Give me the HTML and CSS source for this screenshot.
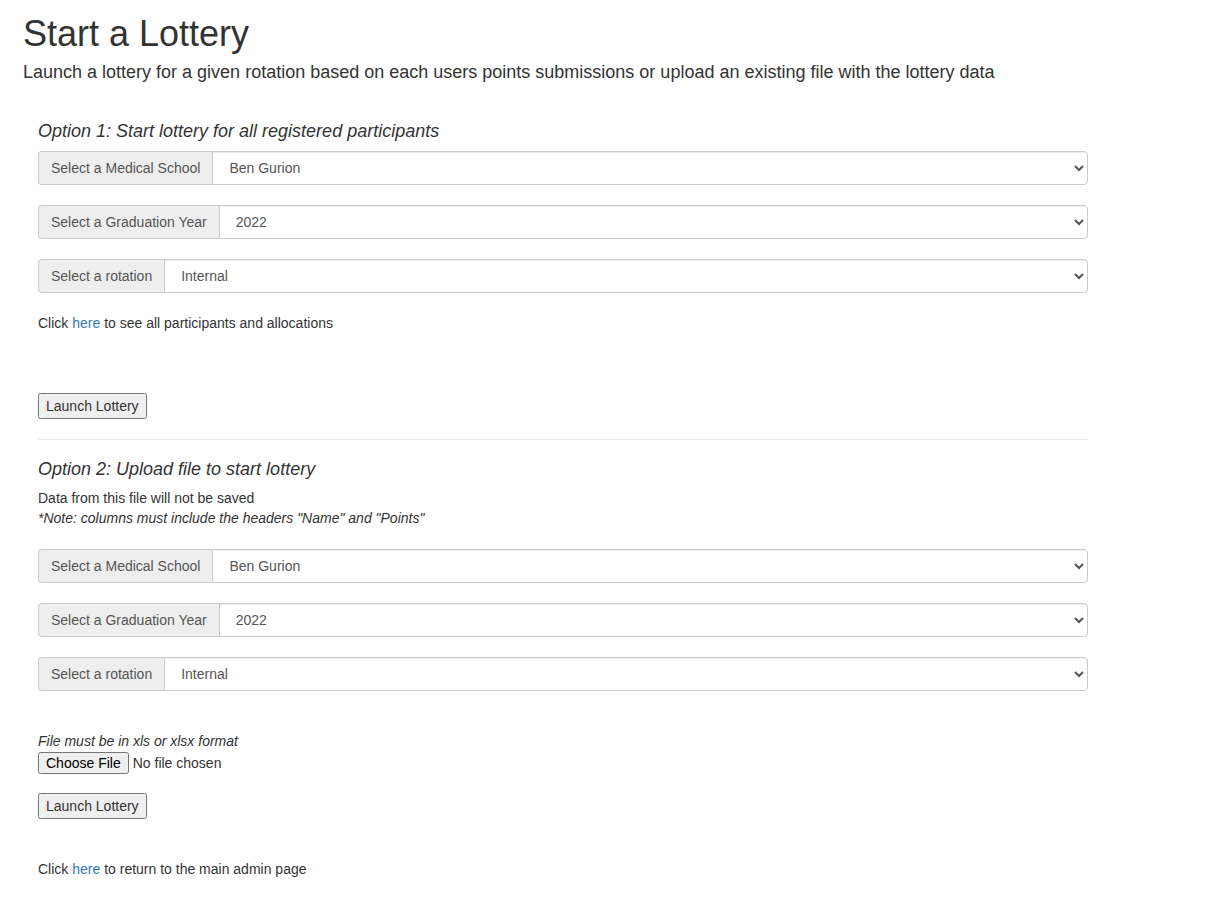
FILE: index.html
```html
<!DOCTYPE html>
<html>
<head>
<meta charset="utf-8">
<title>Start a Lottery</title>
<link rel="stylesheet" href="styles.css">
</head>
<body>
<div class="page">
  <h1 class="title">Start a Lottery</h1>
  <p class="lead">Launch a lottery for a given rotation based on each users points submissions or upload an existing file with the lottery data</p>

  <div class="section">
    <h4 class="option-title">Option 1: Start lottery for all registered participants</h4>
    <div class="input-group">
      <span class="addon">Select a Medical School</span>
      <select class="form-control"><option>Ben Gurion</option></select>
    </div>
    <div class="input-group">
      <span class="addon">Select a Graduation Year</span>
      <select class="form-control"><option>2022</option></select>
    </div>
    <div class="input-group">
      <span class="addon">Select a rotation</span>
      <select class="form-control"><option>Internal</option></select>
    </div>
    <p class="text see-all">Click <a href="#">here</a> to see all participants and allocations</p>
    <div class="launch launch-1"><button class="btn" type="button">Launch Lottery</button></div>
    <hr class="divider">
    <h4 class="option-title">Option 2: Upload file to start lottery</h4>
    <p class="text info">Data from this file will not be saved<br><em>*Note: columns must include the headers "Name" and "Points"</em></p>
    <div class="input-group">
      <span class="addon">Select a Medical School</span>
      <select class="form-control"><option>Ben Gurion</option></select>
    </div>
    <div class="input-group">
      <span class="addon">Select a Graduation Year</span>
      <select class="form-control"><option>2022</option></select>
    </div>
    <div class="input-group">
      <span class="addon">Select a rotation</span>
      <select class="form-control"><option>Internal</option></select>
    </div>
    <div class="file-block">
      <p class="text"><em>File must be in xls or xlsx format</em></p>
      <input class="file" type="file">
    </div>
    <div class="launch launch-2"><button class="btn" type="button">Launch Lottery</button></div>
    <p class="text back">Click <a href="#">here</a> to return to the main admin page</p>
  </div>
</div>
</body>
</html>
```

FILE: styles.css
```css
html, body {
  margin: 0;
  padding: 0;
  background: #fff;
}
body {
  font-family: "Liberation Sans", Arial, Helvetica, sans-serif;
  font-size: 14px;
  line-height: 1.42857;
  color: #333;
}
.page {
  padding: 0 23px;
}
.title {
  font-size: 36px;
  font-weight: 500;
  line-height: 1.1;
  margin: 14px 0 0;
  color: #333;
}
.lead {
  font-size: 18px;
  line-height: 1.1;
  margin: 9px 0 0;
}
.section {
  width: 1050px;
  margin: 40px 0 0 15px;
}
.option-title {
  font-size: 18px;
  font-style: italic;
  font-weight: 500;
  line-height: 1.1;
  margin: 0 0 9px;
}
.input-group {
  display: flex;
  height: 34px;
  margin-bottom: 20px;
}
.addon {
  display: flex;
  align-items: center;
  padding: 2px 12px 0;
  background: #eee;
  border: 1px solid #ccc;
  border-right: 0;
  border-radius: 4px 0 0 4px;
  color: #555;
  font-size: 14px;
  white-space: nowrap;
}
.form-control {
  flex: 1;
  height: 34px;
  padding: 6px 12px;
  font-family: inherit;
  font-size: 14px;
  color: #555;
  background-color: #fff;
  border: 1px solid #ccc;
  border-radius: 0 4px 4px 0;
  box-shadow: inset 0 1px 1px rgba(0,0,0,.075);
  margin: 0;
}
.text {
  margin: 0;
}
.see-all {
  padding-top: 1px;
}
a {
  color: #337ab7;
  text-decoration: none;
}
.btn {
  font-family: inherit;
  font-size: 14px;
  line-height: 20px;
  color: #333;
  margin: 0;
}
.launch-1 {
  margin-top: 59px;
}
.divider {
  border: 0;
  border-top: 1px solid #eee;
  margin: 20px 0 20px;
}
.info {
  margin-top: 0;
  margin-bottom: 20px;
}
.file-block {
  margin-top: 41px;
}
.file {
  display: block;
  font-family: inherit;
  font-size: 14px;
  color: #333;
  margin: 0;
}
.launch-2 {
  margin-top: 19px;
}
.back {
  margin-top: 41px;
}
```
